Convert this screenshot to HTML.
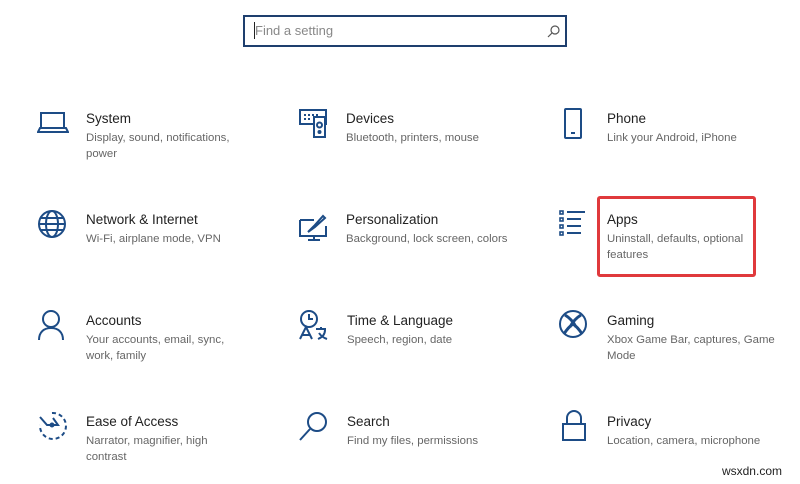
<!DOCTYPE html>
<html><head><meta charset="utf-8"><style>
body{margin:0;width:800px;height:484px;background:#fff;font-family:"Liberation Sans",sans-serif;position:relative;overflow:hidden}
.s{position:absolute;left:243px;top:15px;width:320px;height:28px;border:2px solid #1e3f6e;}
.s span{position:absolute;left:10px;top:6px;font-size:13px;color:#888}
.s i{position:absolute;left:9px;top:5px;width:1px;height:17px;background:#222}
.t{position:absolute;font-size:13.5px;color:#222}
.d{position:absolute;font-size:11.4px;color:#666;line-height:16px;width:160px}
svg{position:absolute;fill:none;stroke:#1d4c86;stroke-width:2}
.r{position:absolute;left:597px;top:196px;width:153px;height:75px;border:3px solid #e0393c;border-radius:3px}
.w{position:absolute;right:18px;bottom:6px;font-size:12px;color:#222}
</style></head><body>
<div class="s"><i></i><span>Find a setting</span>
<svg style="left:302px;top:7px" width="14" height="14" viewBox="0 0 14 14"><circle cx="8" cy="6" r="4" stroke="#555" stroke-width="1.2"/><path d="M5 9 L1 13" stroke="#555" stroke-width="1.2"/></svg></div>

<svg style="left:37px;top:110px" width="32" height="26"><rect x="4" y="3" width="23" height="15"/><path d="M1 22 H31 L29 18 H3 Z"/></svg>
<div class="t" style="left:86px;top:111px">System</div><div class="d" style="left:86px;top:130px">Display, sound, notifications, power</div>

<svg style="left:298px;top:108px" width="32" height="32"><rect x="2" y="2" width="26" height="14"/><path d="M6 7h14M6 11h8" stroke-dasharray="2 2"/><rect x="16" y="9" width="11" height="20" fill="#fff"/><circle cx="21.5" cy="17" r="2.5"/><circle cx="21.5" cy="24" r="1"/></svg>
<div class="t" style="left:346px;top:111px">Devices</div><div class="d" style="left:346px;top:130px;width:180px">Bluetooth, printers, mouse</div>

<svg style="left:562px;top:107px" width="24" height="34"><rect x="3" y="2" width="16" height="29" rx="1"/><path d="M9 26h4"/></svg>
<div class="t" style="left:607px;top:111px">Phone</div><div class="d" style="left:607px;top:130px;width:180px">Link your Android, iPhone</div>

<svg style="left:37px;top:209px" width="32" height="32"><circle cx="15" cy="15" r="13"/><ellipse cx="15" cy="15" rx="6" ry="13"/><path d="M2 15h26M4 9h22M4 21h22"/></svg>
<div class="t" style="left:86px;top:212px">Network &amp; Internet</div><div class="d" style="left:86px;top:231px;width:180px">Wi-Fi, airplane mode, VPN</div>

<svg style="left:298px;top:212px" width="32" height="30"><path d="M2 8h14M2 8v16h26V14"/><path d="M10 28h12M16 24v4"/><path d="M10 20l6-6 9-10 2 2-10 9z"/></svg>
<div class="t" style="left:346px;top:212px">Personalization</div><div class="d" style="left:346px;top:231px;width:200px">Background, lock screen, colors</div>

<svg style="left:558px;top:209px" width="32" height="32"><g stroke-width="1.6"><rect x="2" y="2" width="3" height="3"/><rect x="2" y="9" width="3" height="3"/><rect x="2" y="16" width="3" height="3"/><rect x="2" y="23" width="3" height="3"/></g><path d="M9 3h18M9 10h14M9 17h14M9 24h14"/></svg>
<div class="t" style="left:607px;top:212px">Apps</div><div class="d" style="left:607px;top:231px;width:150px">Uninstall, defaults, optional features</div>
<div class="r"></div>

<svg style="left:37px;top:309px" width="30" height="32"><circle cx="14" cy="10" r="8"/><path d="M2 31c0-8 5-12 12-12s12 4 12 12"/></svg>
<div class="t" style="left:86px;top:313px">Accounts</div><div class="d" style="left:86px;top:332px;width:150px">Your accounts, email, sync, work, family</div>

<svg style="left:298px;top:309px" width="32" height="32"><circle cx="11" cy="10" r="8"/><path d="M11 5v5h4"/><path d="M2 30l6-12 6 12M4 26h8"/><path d="M18 20h10M23 18v3M20 30c5-2 7-5 7-9M21 24c2 3 5 5 8 6"/></svg>
<div class="t" style="left:347px;top:313px">Time &amp; Language</div><div class="d" style="left:347px;top:332px;width:180px">Speech, region, date</div>

<svg style="left:558px;top:309px" width="32" height="32"><circle cx="15" cy="15" r="13"/><path d="M7 6c5 3 9 8 11 12M23 6c-5 3-9 8-11 12M6 25c3-5 6-8 9-10 3 2 6 5 9 10" stroke-width="3"/></svg>
<div class="t" style="left:607px;top:313px">Gaming</div><div class="d" style="left:607px;top:332px;width:170px">Xbox Game Bar, captures, Game Mode</div>

<svg style="left:37px;top:410px" width="32" height="32"><path d="M15 3a13 13 0 1 1 -12 12" stroke-dasharray="4 3"/><path d="M3 7l7 8h11l-5-7"/><circle cx="15" cy="15" r="1.5"/></svg>
<div class="t" style="left:86px;top:414px">Ease of Access</div><div class="d" style="left:86px;top:433px;width:135px">Narrator, magnifier, high contrast</div>

<svg style="left:298px;top:410px" width="32" height="32"><circle cx="19" cy="12" r="9"/><path d="M12 19L2 30"/></svg>
<div class="t" style="left:347px;top:414px">Search</div><div class="d" style="left:347px;top:433px;width:180px">Find my files, permissions</div>

<svg style="left:560px;top:410px" width="28" height="32"><path d="M7 14V8a7 7 0 0 1 14 0v6"/><rect x="3" y="14" width="22" height="16"/></svg>
<div class="t" style="left:607px;top:414px">Privacy</div><div class="d" style="left:607px;top:433px;width:180px">Location, camera, microphone</div>

<div class="w">wsxdn.com</div>
</body></html>
